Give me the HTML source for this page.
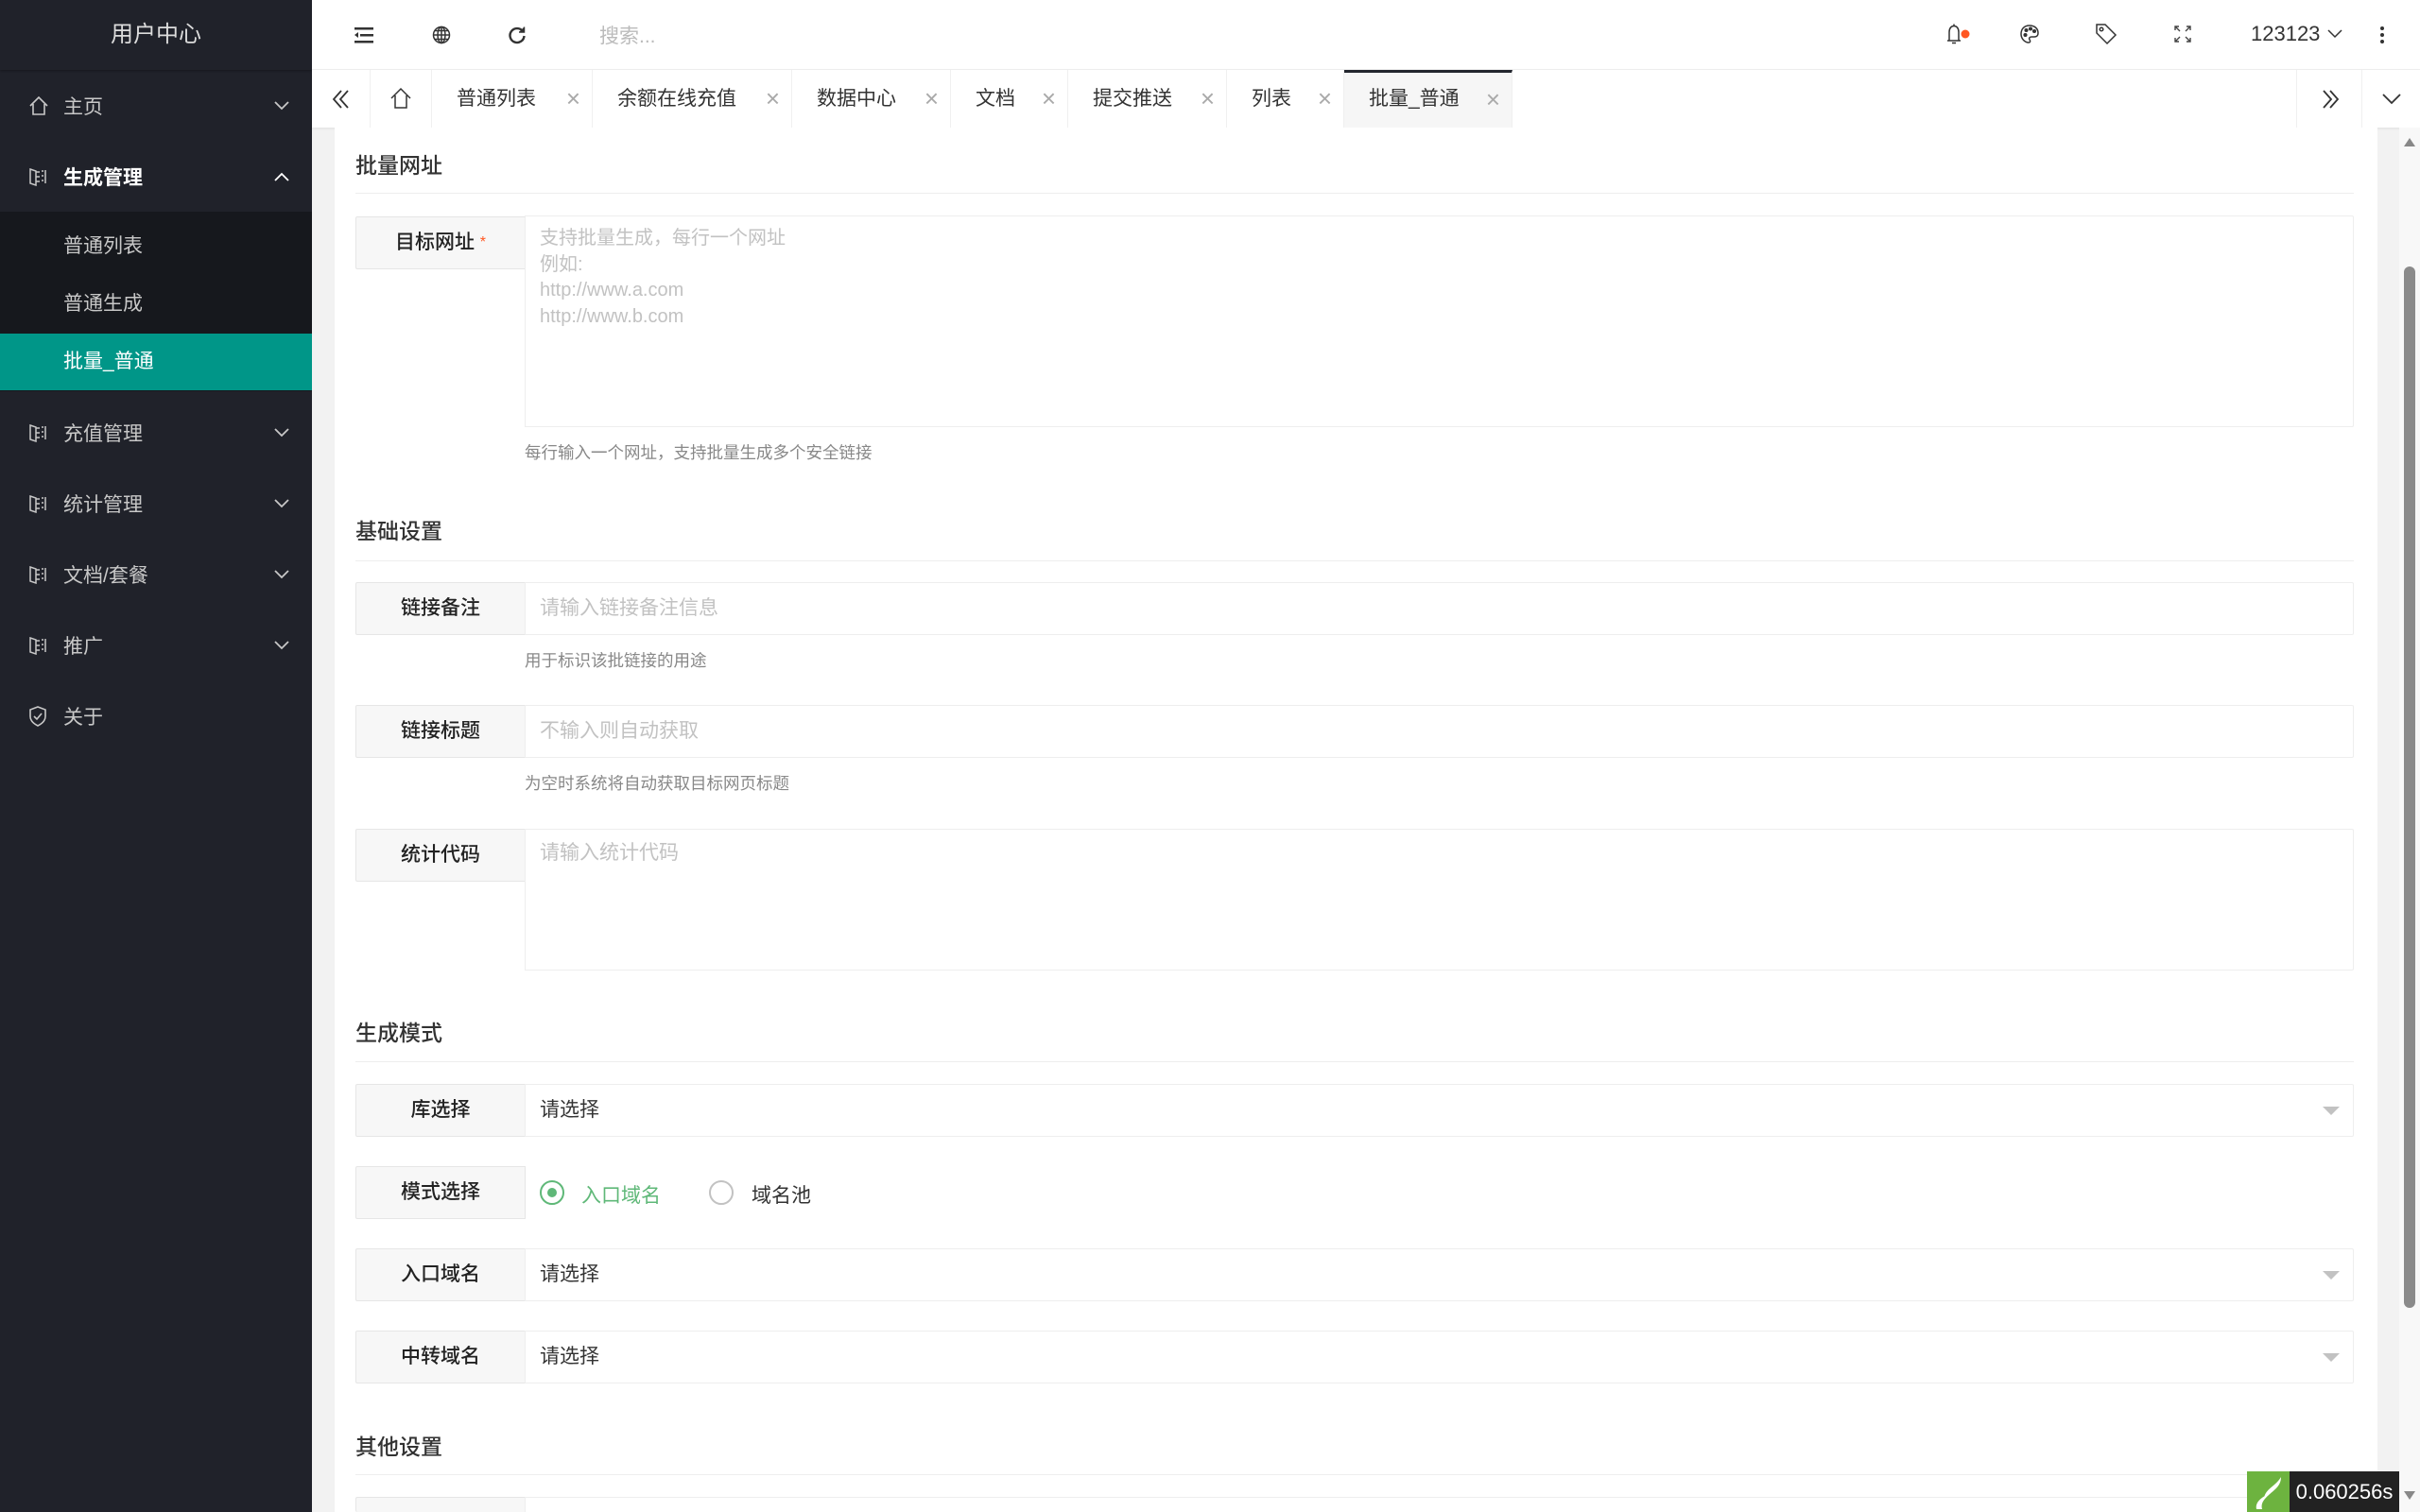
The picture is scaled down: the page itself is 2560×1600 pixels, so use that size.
<!DOCTYPE html>
<html style="width:2560px;height:1600px;overflow:hidden"><head><meta charset="utf-8">
<style>
*{margin:0;padding:0;box-sizing:border-box}
body{width:2560px;height:1600px;overflow:hidden;font-family:"Liberation Sans","Noto Sans CJK SC",sans-serif;background:#f2f2f2;position:relative;color:#333}
.abs{position:absolute}
#side{left:0;top:0;width:330px;height:1600px;background:#20222a}
.logo{left:0;top:0;width:330px;height:74px;line-height:74px;text-align:center;color:#dcdcdc;font-size:24px;box-shadow:0 1px 2px rgba(0,0,0,.3)}
.mi{left:0;width:330px;height:75px;color:#c8c8c8;font-size:21px}
.mi span{position:absolute;left:67px;top:50%;transform:translateY(-50%)}
.mi svg.ic{position:absolute;left:30px;top:50%;transform:translateY(-50%)}
.mi svg.ar{position:absolute;left:289px;top:50%;transform:translateY(-50%)}
.sub{left:0;width:330px;height:60px;color:#c8c8c8;font-size:21px;line-height:60px;padding-left:67px}
#hdr{left:330px;top:0;width:2230px;height:74px;background:#fff;border-bottom:1px solid #f0f0f0}
#tabs{left:330px;top:74px;width:2230px;height:61px;background:#fff;box-shadow:0 1px 3px rgba(0,0,0,.08)}
.tab{top:0;height:61px;line-height:61px;font-size:21px;color:#333;border-right:1px solid #f0f0f0;padding-left:26px}
.tab i{position:absolute;right:12px;top:0;font-style:normal;color:#aaa;font-size:26px;font-weight:300}
#card{left:354px;top:135px;width:2161px;height:1465px;background:#fff}
.h{left:376px;font-size:23px;color:#333;font-weight:500}
.hr{left:376px;width:2114px;height:1px;background:#eee}
.lb{left:376px;width:180px;background:#f7f7f7;border:1px solid #e6e6e6;font-size:21px;color:#222;text-align:center;border-radius:2px 0 0 2px;font-weight:500}
.in{left:555px;width:1935px;border:1px solid #eee;background:#fff;font-size:21px;color:#c2c2c2;padding-left:15px;border-radius:0 2px 2px 0}
.help{left:555px;font-size:17.5px;color:#888}
.arr{position:absolute;right:14px;width:0;height:0;border-left:9px solid transparent;border-right:9px solid transparent;border-top:9px solid #c2c2c2}
</style></head><body>
<div id="side" class="abs">
 <div class="abs logo">用户中心</div>
 <div class="abs mi" style="top:74px"><svg class="ic" width="22" height="22" viewBox="0 0 22 22" fill="none" stroke="#c8c8c8" stroke-width="1.6"><path d="M2 11 L11 2 L20 11 M5 9 V20 H17 V9"/></svg><span>主页</span><svg class="ar" width="18" height="12" viewBox="0 0 18 12" fill="none" stroke="#c8c8c8" stroke-width="1.8"><path d="M2 2 L9 9 L16 2"/></svg></div>
 <div class="abs mi" style="top:149px;color:#fff"><svg class="ic" width="20" height="20" viewBox="0 0 20 20" fill="none" stroke="#c8c8c8" stroke-width="1.5"><path d="M2 2 L8 4 V19 L2 17 Z M8 5 H12 M8 10 H12 M8 15 H12 M15 3 V5 M15 8 V10 M15 13 V15 M18 3 V17"/></svg><span style="font-weight:bold">生成管理</span><svg class="ar" width="18" height="12" viewBox="0 0 18 12" fill="none" stroke="#fff" stroke-width="1.8"><path d="M2 10 L9 3 L16 10"/></svg></div>
 <div class="abs" style="left:0;top:224px;width:330px;height:190px;background:#16181d"></div>
 <div class="abs sub" style="top:231px">普通列表</div>
 <div class="abs sub" style="top:292px">普通生成</div>
 <div class="abs sub" style="top:353px;background:#009688;color:#fff">批量_普通</div>
 <div class="abs mi" style="top:420px"><svg class="ic" width="20" height="20" viewBox="0 0 20 20" fill="none" stroke="#c8c8c8" stroke-width="1.5"><path d="M2 2 L8 4 V19 L2 17 Z M8 5 H12 M8 10 H12 M8 15 H12 M15 3 V5 M15 8 V10 M15 13 V15 M18 3 V17"/></svg><span>充值管理</span><svg class="ar" width="18" height="12" viewBox="0 0 18 12" fill="none" stroke="#c8c8c8" stroke-width="1.8"><path d="M2 2 L9 9 L16 2"/></svg></div>
 <div class="abs mi" style="top:495px"><svg class="ic" width="20" height="20" viewBox="0 0 20 20" fill="none" stroke="#c8c8c8" stroke-width="1.5"><path d="M2 2 L8 4 V19 L2 17 Z M8 5 H12 M8 10 H12 M8 15 H12 M15 3 V5 M15 8 V10 M15 13 V15 M18 3 V17"/></svg><span>统计管理</span><svg class="ar" width="18" height="12" viewBox="0 0 18 12" fill="none" stroke="#c8c8c8" stroke-width="1.8"><path d="M2 2 L9 9 L16 2"/></svg></div>
 <div class="abs mi" style="top:570px"><svg class="ic" width="20" height="20" viewBox="0 0 20 20" fill="none" stroke="#c8c8c8" stroke-width="1.5"><path d="M2 2 L8 4 V19 L2 17 Z M8 5 H12 M8 10 H12 M8 15 H12 M15 3 V5 M15 8 V10 M15 13 V15 M18 3 V17"/></svg><span>文档/套餐</span><svg class="ar" width="18" height="12" viewBox="0 0 18 12" fill="none" stroke="#c8c8c8" stroke-width="1.8"><path d="M2 2 L9 9 L16 2"/></svg></div>
 <div class="abs mi" style="top:645px"><svg class="ic" width="20" height="20" viewBox="0 0 20 20" fill="none" stroke="#c8c8c8" stroke-width="1.5"><path d="M2 2 L8 4 V19 L2 17 Z M8 5 H12 M8 10 H12 M8 15 H12 M15 3 V5 M15 8 V10 M15 13 V15 M18 3 V17"/></svg><span>推广</span><svg class="ar" width="18" height="12" viewBox="0 0 18 12" fill="none" stroke="#c8c8c8" stroke-width="1.8"><path d="M2 2 L9 9 L16 2"/></svg></div>
 <div class="abs mi" style="top:720px"><svg class="ic" width="20" height="22" viewBox="0 0 20 22" fill="none" stroke="#c8c8c8" stroke-width="1.6"><path d="M10 1 L18 4 V11 C18 16 14 19 10 21 C6 19 2 16 2 11 V4 Z M6 11 L9 14 L14 8"/></svg><span>关于</span></div>
</div>

<div id="hdr" class="abs">
 <svg class="abs" style="left:45px;top:27px" width="20" height="20" viewBox="0 0 20 20" fill="#333"><rect x="0" y="2" width="20" height="2.5"/><rect x="6" y="9" width="14" height="2.5"/><rect x="0" y="16" width="20" height="2.5"/><path d="M0 10 L4 7 V13 Z"/></svg>
 <svg class="abs" style="left:127px;top:27px" width="20" height="20" viewBox="0 0 20 20" fill="none" stroke="#333" stroke-width="1.5"><circle cx="10" cy="10" r="8.5"/><ellipse cx="10" cy="10" rx="4" ry="8.5"/><path d="M1.5 10 H18.5 M3 5.5 H17 M3 14.5 H17 M10 1.5 V18.5"/></svg>
 <svg class="abs" style="left:207px;top:27px" width="20" height="20" viewBox="0 0 20 20" fill="none" stroke="#333" stroke-width="2.4"><path d="M16 6 A7.5 7.5 0 1 0 17.5 11"/><path d="M17.5 1.5 V7 H12" fill="#333" stroke-width="1.5"/></svg>
 <div class="abs" style="left:304px;top:22px;font-size:21px;color:#bbb">搜索...</div>
 <svg class="abs" style="left:1727px;top:24px" width="40" height="24" viewBox="0 0 40 24" fill="none" stroke="#333" stroke-width="1.5"><path d="M3 19 H17 M5 19 V10 C5 6 7 3.5 10 3.5 C13 3.5 15 6 15 10 V19 M10 1.5 V3.5 M8 21.5 H12"/><circle cx="22" cy="12" r="4.5" fill="#ff5722" stroke="none"/></svg>
 <svg class="abs" style="left:1806px;top:25px" width="22" height="22" viewBox="0 0 22 22" fill="none" stroke="#333" stroke-width="1.5"><path d="M11 2 C5 2 2 6 2 11 C2 16 6 20 10 20 C12 20 12 18 11 17 C10 15.5 11 14 13 14 H16 C19 14 20 12 20 10 C20 5 16 2 11 2 Z"/><circle cx="6.5" cy="12" r="1.3" fill="#333"/><circle cx="7.5" cy="7" r="1.3" fill="#333"/><circle cx="12" cy="5.5" r="1.3" fill="#333"/><circle cx="16" cy="8" r="1.3" fill="#333"/></svg>
 <svg class="abs" style="left:1886px;top:24px" width="24" height="24" viewBox="0 0 24 24" fill="none" stroke="#333" stroke-width="1.5"><path d="M2 2 H11 L22 13 L13 22 L2 11 Z"/><circle cx="7" cy="7" r="1.8"/></svg>
 <svg class="abs" style="left:1970px;top:27px" width="18" height="18" viewBox="0 0 18 18" fill="none" stroke="#444" stroke-width="1.4"><path d="M1 5 V1 H5 M1 1 L6 6 M13 1 H17 V5 M17 1 L12 6 M1 13 V17 H5 M1 17 L6 12 M13 17 H17 V13 M17 17 L12 12"/></svg>
 <div class="abs" style="left:2051px;top:23px;font-size:22px;color:#333">123123</div>
 <svg class="abs" style="left:2132px;top:31px" width="16" height="10" viewBox="0 0 16 10" fill="none" stroke="#333" stroke-width="1.5"><path d="M1 1 L8 8 L15 1"/></svg>
 <svg class="abs" style="left:2187px;top:27px" width="6" height="20" viewBox="0 0 6 20" fill="#333"><circle cx="3" cy="3" r="2"/><circle cx="3" cy="10" r="2"/><circle cx="3" cy="17" r="2"/></svg>
</div>

<div id="tabs" class="abs">
 <div class="abs" style="left:0;top:0;width:62px;height:61px;border-right:1px solid #f0f0f0"><svg class="abs" style="left:20px;top:20px" width="22" height="22" viewBox="0 0 22 22" fill="none" stroke="#333" stroke-width="1.8"><path d="M11 2 L3 11 L11 20 M18 2 L10 11 L18 20"/></svg></div>
 <div class="abs" style="left:62px;top:0;width:65px;height:61px;border-right:1px solid #f0f0f0"><svg class="abs" style="left:20px;top:18px" width="24" height="24" viewBox="0 0 24 24" fill="none" stroke="#333" stroke-width="1.5"><path d="M2 12 L12 2 L22 12 M6 9 V22 H18 V9"/></svg></div>
 <div class="abs tab" style="left:127px;width:170px">普通列表<i>×</i></div>
 <div class="abs tab" style="left:297px;width:211px">余额在线充值<i>×</i></div>
 <div class="abs tab" style="left:508px;width:168px">数据中心<i>×</i></div>
 <div class="abs tab" style="left:676px;width:124px">文档<i>×</i></div>
 <div class="abs tab" style="left:800px;width:168px">提交推送<i>×</i></div>
 <div class="abs tab" style="left:968px;width:124px">列表<i>×</i></div>
 <div class="abs tab" style="left:1092px;width:178px;background:#f6f6f6;border-top:3px solid #23262e;line-height:56px">批量_普通<i style="line-height:56px">×</i></div>
 <div class="abs" style="left:2099px;top:0;width:69px;height:61px;border-left:1px solid #f0f0f0"><svg class="abs" style="left:24px;top:20px" width="22" height="22" viewBox="0 0 22 22" fill="none" stroke="#333" stroke-width="1.8"><path d="M4 2 L12 11 L4 20 M11 2 L19 11 L11 20"/></svg></div>
 <div class="abs" style="left:2168px;top:0;width:62px;height:61px;border-left:1px solid #f0f0f0"><svg class="abs" style="left:20px;top:24px" width="22" height="14" viewBox="0 0 22 14" fill="none" stroke="#333" stroke-width="1.8"><path d="M2 2 L11 11 L20 2"/></svg></div>
</div>

<div id="card" class="abs"></div>
<div class="abs" style="left:2538px;top:135px;width:22px;height:1465px;background:#f8f8f8"></div>
<div class="abs" style="left:2543px;top:282px;width:12px;height:1102px;background:#8a8a8a;border-radius:6px"></div>
<div class="abs" style="left:2543px;top:146px;width:0;height:0;border-left:6px solid transparent;border-right:6px solid transparent;border-bottom:9px solid #888"></div>

<div class="abs h" style="top:156px">批量网址</div>
<div class="abs hr" style="top:204px"></div>
<div class="abs lb" style="top:229px;height:56px;line-height:54px">目标网址 <span style="color:#ff5722;font-size:16px;vertical-align:top">*</span></div>
<div class="abs in" style="top:228px;height:224px;padding-top:10px;line-height:27.7px;font-size:20px">支持批量生成，每行一个网址<br>例如:<br>http://www.a.com<br>http://www.b.com</div>
<div class="abs help" style="top:466px">每行输入一个网址，支持批量生成多个安全链接</div>

<div class="abs h" style="top:543px">基础设置</div>
<div class="abs hr" style="top:593px"></div>
<div class="abs lb" style="top:616px;height:56px;line-height:54px">链接备注</div>
<div class="abs in" style="top:616px;height:56px;line-height:54px">请输入链接备注信息</div>
<div class="abs help" style="top:686px">用于标识该批链接的用途</div>

<div class="abs lb" style="top:746px;height:56px;line-height:54px">链接标题</div>
<div class="abs in" style="top:746px;height:56px;line-height:54px">不输入则自动获取</div>
<div class="abs help" style="top:816px">为空时系统将自动获取目标网页标题</div>

<div class="abs lb" style="top:877px;height:56px;line-height:54px">统计代码</div>
<div class="abs in" style="top:877px;height:150px;padding-top:8px">请输入统计代码</div>

<div class="abs h" style="top:1074px">生成模式</div>
<div class="abs hr" style="top:1123px"></div>
<div class="abs lb" style="top:1147px;height:56px;line-height:54px">库选择</div>
<div class="abs in" style="top:1147px;height:56px;line-height:54px;color:#333">请选择<div class="arr" style="top:23px"></div></div>
<div class="abs lb" style="top:1234px;height:56px;line-height:54px">模式选择</div>
<div class="abs" style="left:571px;top:1249px;width:26px;height:26px;border:2px solid #5fb878;border-radius:50%"><div class="abs" style="left:6px;top:6px;width:10px;height:10px;background:#5fb878;border-radius:50%"></div></div>
<div class="abs" style="left:615px;top:1249px;font-size:21px;color:#5fb878">入口域名</div>
<div class="abs" style="left:750px;top:1249px;width:26px;height:26px;border:2px solid #c2c2c2;border-radius:50%"></div>
<div class="abs" style="left:795px;top:1249px;font-size:21px;color:#333">域名池</div>
<div class="abs lb" style="top:1321px;height:56px;line-height:54px">入口域名</div>
<div class="abs in" style="top:1321px;height:56px;line-height:54px;color:#333">请选择<div class="arr" style="top:23px"></div></div>
<div class="abs lb" style="top:1408px;height:56px;line-height:54px">中转域名</div>
<div class="abs in" style="top:1408px;height:56px;line-height:54px;color:#333">请选择<div class="arr" style="top:23px"></div></div>

<div class="abs h" style="top:1512px">其他设置</div>
<div class="abs hr" style="top:1560px"></div>
<div class="abs lb" style="top:1584px;height:16px;border-bottom:none"></div>
<div class="abs in" style="top:1584px;height:16px;border-bottom:none"></div>

<div class="abs" style="left:2377px;top:1557px;width:45px;height:43px;background:#6db33f"><svg width="45" height="43" viewBox="0 0 45 43" fill="#fff"><path d="M10 40 C8 30 20 26 28 20 C20 28 14 32 16 40 Z M18 28 C20 18 30 16 36 6 C36 16 28 20 22 26 Z"/></svg></div>
<div class="abs" style="left:2422px;top:1557px;width:116px;height:43px;background:#222;color:#fff;font-size:22px;line-height:43px;text-align:center">0.060256s</div>
<div class="abs" style="left:2543px;top:1578px;width:0;height:0;border-left:6px solid transparent;border-right:6px solid transparent;border-top:9px solid #888"></div>
</body></html>
